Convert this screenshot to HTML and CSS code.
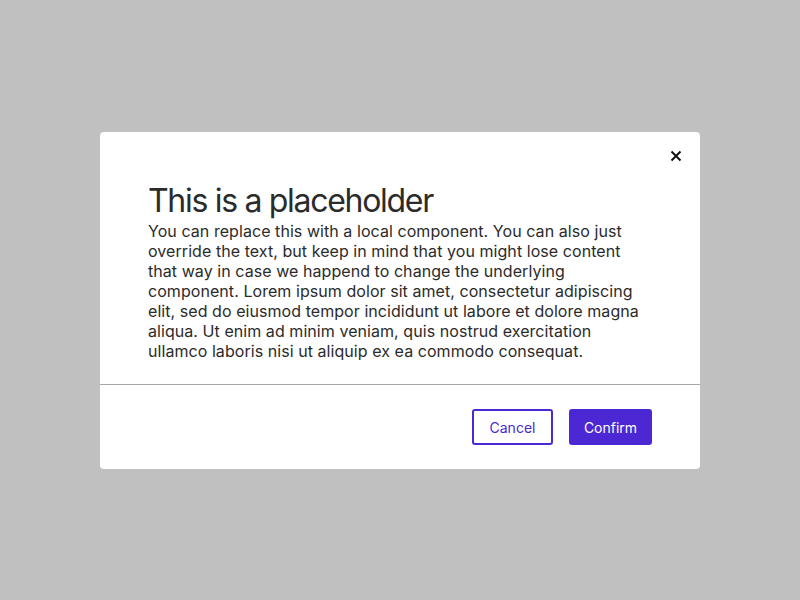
FILE: index.html
```html
<!DOCTYPE html>
<html>
<head>
<meta charset="utf-8">
<link rel="stylesheet" href="styles.css">
</head>
<body>
<div class="backdrop">
  <div class="modal">
    <button class="close" aria-label="Close">
      <svg width="12" height="12" viewBox="0 0 12 12"><path d="M1.5 1.5L10.5 10.5M10.5 1.5L1.5 10.5" stroke="#111" stroke-width="2" fill="none"/></svg>
    </button>
    <div class="content">
      <h1 class="title">This is a placeholder</h1>
      <p class="text">You can replace this with a local component. You can also just override the text, but keep in mind that you might lose content that way in case we happend to change the underlying component. Lorem ipsum dolor sit amet, consectetur adipiscing elit, sed do eiusmod tempor incididunt ut labore et dolore magna aliqua. Ut enim ad minim veniam, quis nostrud exercitation ullamco laboris nisi ut aliquip ex ea commodo consequat.</p>
    </div>
    <div class="footer">
      <button class="btn btn-secondary">Cancel</button>
      <button class="btn btn-primary">Confirm</button>
    </div>
  </div>
</div>
</body>
</html>
```
FILE: styles.css
```css
* { box-sizing: border-box; }
html, body { margin: 0; padding: 0; }
body {
  background: #c0c0c0;
  font-family: Inter, "Liberation Sans", sans-serif;
  color: #2b2b2b;
}
.backdrop {
  width: 800px;
  height: 600px;
  display: flex;
  align-items: center;
  justify-content: center;
}
.modal {
  position: relative;
  width: 600px;
  background: #fff;
  border-radius: 4px;
  margin-top: 1px;
}
.close {
  position: absolute;
  top: 12px;
  right: 12px;
  width: 24px;
  height: 24px;
  border: 0;
  background: none;
  padding: 0;
  display: flex;
  align-items: center;
  justify-content: center;
  cursor: pointer;
}
.content {
  padding: 49px 48px 23px;
  border-bottom: 1px solid #a8a8a8;
}
.title {
  margin: 0;
  font-size: 32px;
  line-height: 40px;
  font-weight: 400;
  letter-spacing: -1.3px;
  color: #2b2b2b;
}
.text {
  margin: 0;
  font-size: 16px;
  line-height: 20px;
  letter-spacing: 0.06px;
  color: #2b2b2b;
}
.footer {
  display: flex;
  justify-content: flex-end;
  gap: 16px;
  padding: 24px 48px;
}
.btn {
  height: 36px;
  padding: 0;
  font-family: Inter, "Liberation Sans", sans-serif;
  font-size: 14px;
  border-radius: 3px;
  text-align: center;
  cursor: pointer;
}
.btn-secondary {
  width: 81px;
  background: #fff;
  color: #4b28d3;
  border: 2px solid #4b28d3;
}
.btn-primary {
  width: 83px;
  background: #4b28d3;
  color: #fff;
  border: 2px solid #4b28d3;
}
```
